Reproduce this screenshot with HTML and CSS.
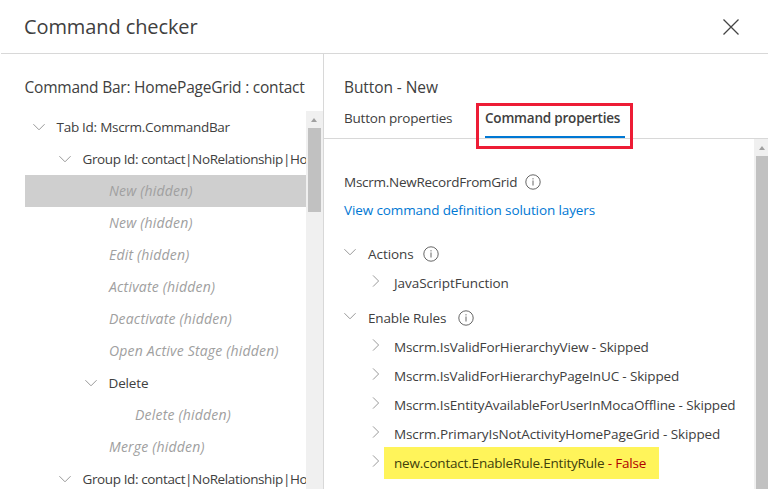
FILE: index.html
```html
<!DOCTYPE html>
<html lang="en">
<head>
<meta charset="utf-8">
<title>Command checker</title>
<link rel="stylesheet" href="styles.css">
</head>
<body>
<svg class="defs" width="0" height="0">
  <symbol id="down" viewBox="0 0 12 12"><path d="M.4 3.2 6 8.8l5.6-5.6"/></symbol>
  <symbol id="right" viewBox="0 0 12 12"><path d="M3 .4 8.6 6 3 11.6"/></symbol>
  <symbol id="info" viewBox="0 0 16 16"><circle cx="8" cy="8" r="7.2"/><path d="M8 6.5V11.5M8 4.2V5.4"/></symbol>
</svg>
<div class="dialog">
  <header class="header">
    <h1>Command checker</h1>
    <svg class="close" viewBox="0 0 16 16"><path d="M.5.5l15 15M15.5.5l-15 15"/></svg>
  </header>
  <main class="panes">
    <section class="left">
      <h2 class="bar-title">Command Bar: HomePageGrid : contact</h2>
      <div class="tree-area">
        <div class="tree">
          <div class="node level1"><svg class="chev"><use href="#down"/></svg><span class="sp-tab">Tab Id: Mscrm.CommandBar</span></div>
          <div class="node level2"><svg class="chev"><use href="#down"/></svg><span class="sp-group">Group Id: contact|NoRelationship|Ho</span></div>
          <div class="node level4 hidden selected">New (hidden)</div>
          <div class="node level4 hidden">New (hidden)</div>
          <div class="node level4 hidden">Edit (hidden)</div>
          <div class="node level4 hidden">Activate (hidden)</div>
          <div class="node level4 hidden">Deactivate (hidden)</div>
          <div class="node level4 hidden">Open Active Stage (hidden)</div>
          <div class="node level3"><svg class="chev"><use href="#down"/></svg><span class="sp-mid">Delete</span></div>
          <div class="node level5 hidden">Delete (hidden)</div>
          <div class="node level4 hidden">Merge (hidden)</div>
          <div class="node level2"><svg class="chev"><use href="#down"/></svg><span class="sp-group">Group Id: contact|NoRelationship|Ho</span></div>
        </div>
        <div class="scrollbar"><i class="arrow"></i><i class="thumb short"></i></div>
      </div>
    </section>
    <section class="right">
      <h2 class="button-title">Button - New</h2>
      <nav class="tabs">
        <span class="tab">Button properties</span>
        <span class="tab active">Command properties</span>
      </nav>
      <div class="detail-area">
        <div class="details">
          <div class="command"><span class="sp-command">Mscrm.NewRecordFromGrid</span><svg class="info"><use href="#info"/></svg></div>
          <a class="link">View command definition solution layers</a>
          <div class="section"><svg class="chev"><use href="#down"/></svg><span class="sp-light">Actions</span><svg class="info actions-info"><use href="#info"/></svg></div>
          <div class="rule"><svg class="chev"><use href="#right"/></svg><span class="sp-light">JavaScriptFunction</span></div>
          <div class="section enable"><svg class="chev"><use href="#down"/></svg><span class="sp-mid">Enable Rules</span><svg class="info enable-info"><use href="#info"/></svg></div>
          <div class="rule"><svg class="chev"><use href="#right"/></svg><span>Mscrm.IsValidForHierarchyView - Skipped</span></div>
          <div class="rule"><svg class="chev"><use href="#right"/></svg><span class="sp-page">Mscrm.IsValidForHierarchyPageInUC - Skipped</span></div>
          <div class="rule"><svg class="chev"><use href="#right"/></svg><span>Mscrm.IsEntityAvailableForUserInMocaOffline - Skipped</span></div>
          <div class="rule"><svg class="chev"><use href="#right"/></svg><span class="link-spacing">Mscrm.PrimaryIsNotActivityHomePageGrid - Skipped</span></div>
          <div class="rule"><svg class="chev"><use href="#right"/></svg><span class="highlight">new.contact.EnableRule.EntityRule <b>- False</b></span></div>
        </div>
        <div class="scrollbar detail-scroll"><i class="arrow"></i><i class="thumb"></i></div>
      </div>
    </section>
  </main>
</div>
</body>
</html>
```
FILE: styles.css
```css
*, *::before, *::after { box-sizing: border-box; }
body { margin: 0; overflow: hidden; background: #fff; color: #404040; font: 13.5px/20px "Open Sans", sans-serif; }
h1, h2 { margin: 0; font-weight: 400; white-space: nowrap; }
svg { fill: none; flex: none; }
.defs { position: absolute; }
.dialog { width: 768px; height: 489px; display: flex; flex-direction: column; overflow: hidden; }
.header { height: 54px; margin-left: 1px; padding: 0 29px 0 23px; display: flex; align-items: center; justify-content: space-between; border-bottom: 1px solid #d8d8d8; }
h1 { font-size: 20px; line-height: 28px; letter-spacing: -.1px; }
.close { width: 16px; height: 16px; stroke: #444; stroke-width: 1.25; }
.panes { display: flex; flex: 1; min-height: 0; }
.left { width: 324px; border-right: 1px solid #d8d8d8; padding-left: 25px; display: flex; flex-direction: column; }
h2 { font-size: 15.5px; line-height: 22px; letter-spacing: -.22px; }
.bar-title { height: 57px; padding-top: 22px; margin-left: -.5px; }
.tree-area { display: flex; flex: 1; min-height: 0; }
.tree { width: 281px; overflow: hidden; }
.node { height: 32px; display: flex; align-items: center; white-space: nowrap; }
.level1 { padding-left: 8px; }
.level2 { padding-left: 34px; }
.level3 { padding-left: 60px; }
.level4 { padding-left: 84px; }
.level5 { padding-left: 110px; }
.node .chev { margin-right: 11.5px; }
.chev { width: 12px; height: 12px; stroke: #999; stroke-width: 1; }
.hidden { color: #a0a0a0; font-style: italic; font-size: 14px; letter-spacing: .2px; }
.selected { background: #cfcfcf; }
.scrollbar { width: 17px; background: #f0f0f0; display: flex; flex-direction: column; }
.arrow { width: 0; height: 0; margin: 7px 0 0 5px; border: 3.5px solid transparent; border-top: 0; border-bottom: 4px solid #a0a0a0; }
.thumb { width: 13px; flex: 1; margin: 6px 0 0 2px; background: #c1c1c1; }
.short { flex: none; height: 84px; }
.right { width: 444px; display: flex; flex-direction: column; }
.button-title { height: 54px; padding: 22px 0 0 20px; letter-spacing: -.08px; }
.tabs { height: 31px; padding-left: 20px; display: flex; border-bottom: 1px solid #d8d8d8; }
.tab { width: 141px; letter-spacing: -.22px; white-space: nowrap; }
.active { width: 140px; height: 30px; font-weight: 600; letter-spacing: -.2px; position: relative; }
.active::after { content: ""; position: absolute; left: 0; right: 0; bottom: 0; height: 2px; background: #0078d4; }
.active::before { content: ""; position: absolute; left: -9px; top: -5px; width: 157px; height: 46px; border: 3px solid #ed1c35; }
.detail-area { display: flex; flex: 1; min-height: 0; }
.details { width: 430px; padding: 33px 0 0 20px; overflow: hidden; white-space: nowrap; }
.detail-scroll { width: 14px; overflow: hidden; }
.command { height: 20px; display: flex; align-items: center; letter-spacing: -.26px; }
.info { width: 16px; height: 16px; margin-left: 8px; stroke: #666; stroke-width: 1; }
.link { display: block; margin-top: 8px; color: #0078d4; letter-spacing: -.11px; }
.section { height: 20px; margin-top: 24px; display: flex; align-items: center; }
.section .chev { margin: -4px 12px 0 0; }
.actions-info { margin-left: 9.5px; }
.enable-info { margin-left: 12px; }
.enable { margin-top: 11px; margin-bottom: 4px; }
.rule { height: 29px; padding-left: 26px; display: flex; align-items: center; letter-spacing: -.14px; }
.rule .chev { margin: -4px 12px 0 0; }
.section + .rule { margin-top: 4px; }
.section.enable + .rule { margin-top: 0; }
.highlight { margin-left: -10px; width: 275px; height: 32px; line-height: 32px; padding-left: 10px; background: #fff45a; letter-spacing: -.19px; color: #40400c; }
.highlight b { font-weight: 400; color: #b00000; }
.sp-tab { letter-spacing: -.27px; }
.sp-group { letter-spacing: -.38px; }
.sp-light { letter-spacing: -.06px; }
.sp-mid { letter-spacing: -.16px; }
.sp-page { letter-spacing: -.15px; }
.link-spacing { letter-spacing: -.11px; }
```
